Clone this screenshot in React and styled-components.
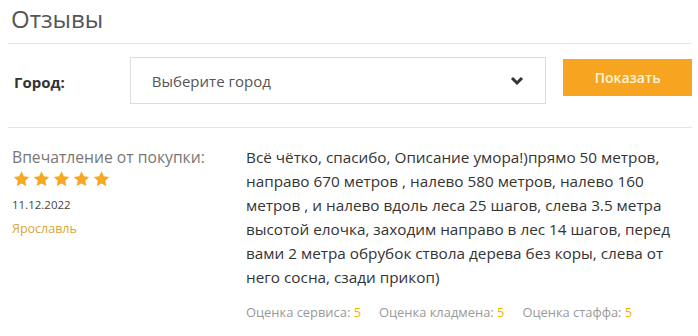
import styled, { createGlobalStyle } from "styled-components";

const Global = createGlobalStyle`
  body {
    margin: 0;
    background: #fff;
    font-family: "Open Sans", "Liberation Sans", sans-serif;
    color: #333;
  }
`;

const Page = styled.div`
  width: 698px;
  padding: 0 6px 0 8px;
  box-sizing: border-box;
`;

const Title = styled.h1`
  margin: 0;
  padding: 2px 0 0 3px;
  height: 44px;
  box-sizing: border-box;
  font-size: 24px;
  font-weight: 400;
  line-height: 34px;
  color: #555;
  border-bottom: 1px solid #e6e6e6;
`;

const FilterRow = styled.div`
  display: flex;
  align-items: flex-start;
  height: 84px;
  padding-top: 13px;
  box-sizing: border-box;
  border-bottom: 1px solid #e6e6e6;
`;

const Label = styled.span`
  width: 122px;
  padding-left: 6px;
  margin-top: 14px;
  line-height: 22px;
  font-size: 15px;
  font-weight: 700;
  color: #333;
  box-sizing: border-box;
`;

const Select = styled.div`
  width: 417px;
  height: 47px;
  box-sizing: border-box;
  border: 1px solid #dcdcdc;
  display: flex;
  align-items: center;
  justify-content: space-between;
  padding: 0 21px 0 21px;
  font-size: 15px;
  color: #555;
  margin-right: 17px;
`;

const Button = styled.button`
  width: 129px;
  height: 37px;
  margin-top: 2px;
  border: none;
  background: #f7a520;
  color: #fff4d8;
  font-family: inherit;
  font-size: 14px;
  font-weight: 600;
`;

const Review = styled.div`
  display: flex;
  padding-top: 17px;
`;

const Meta = styled.div`
  width: 238px;
  padding-left: 4px;
  box-sizing: border-box;
  display: flex;
  flex-direction: column;
`;

const MetaTitle = styled.div`
  font-size: 15.7px;
  color: #777;
  line-height: 24px;
`;

const Stars = styled.div`
  display: flex;
  gap: 1px;
  margin-top: 1px;
`;

const DateText = styled.div`
  font-size: 11.5px;
  color: #444;
  margin-top: 9px;
  line-height: 16px;
`;

const City = styled.div`
  font-size: 12.5px;
  color: #d9a53a;
  margin-top: 7px;
  line-height: 18px;
`;

const Body = styled.div`
  width: 446px;
`;

const Text = styled.p`
  margin: 0;
  font-size: 15.3px;
  line-height: 24px;
  color: #333;
`;

const Scores = styled.div`
  display: flex;
  gap: 18px;
  margin-top: 14px;
  font-size: 12.9px;
  line-height: 18px;
  color: #999;
`;

const Score = styled.span`
  b {
    font-weight: 400;
    color: #f0b400;
  }
`;

const Star = () => (
  <svg width="19" height="18" viewBox="0 0 24 24">
    <path
      d="M12 1.8l3.1 6.6 7.2.9-5.3 5 1.4 7.1L12 17.9l-6.4 3.5L7 14.3l-5.3-5 7.2-.9z"
      fill="#f7a823"
    />
  </svg>
);

const Chevron = () => (
  <svg width="14" height="10" viewBox="0 0 14 10">
    <path d="M2 2l5 5 5-5" fill="none" stroke="#333" strokeWidth="3" />
  </svg>
);

export default function App() {
  return (
    <Page>
      <Global />
      <Title>Отзывы</Title>
      <FilterRow>
        <Label>Город:</Label>
        <Select>
          <span>Выберите город</span>
          <Chevron />
        </Select>
        <Button>Показать</Button>
      </FilterRow>
      <Review>
        <Meta>
          <MetaTitle>Впечатление от покупки:</MetaTitle>
          <Stars>
            {[0, 1, 2, 3, 4].map((i) => (
              <Star key={i} />
            ))}
          </Stars>
          <DateText>11.12.2022</DateText>
          <City>Ярославль</City>
        </Meta>
        <Body>
          <Text>
            Всё чётко, спасибо, Описание умора!)прямо 50 метров, направо 670
            метров , налево 580 метров, налево 160 метров , и налево вдоль леса
            25 шагов, слева 3.5 метра высотой елочка, заходим направо в лес 14
            шагов, перед вами 2 метра обрубок ствола дерева без коры, слева от
            него сосна, сзади прикоп)
          </Text>
          <Scores>
            <Score>
              Оценка сервиса: <b>5</b>
            </Score>
            <Score>
              Оценка кладмена: <b>5</b>
            </Score>
            <Score>
              Оценка стаффа: <b>5</b>
            </Score>
          </Scores>
        </Body>
      </Review>
    </Page>
  );
}
